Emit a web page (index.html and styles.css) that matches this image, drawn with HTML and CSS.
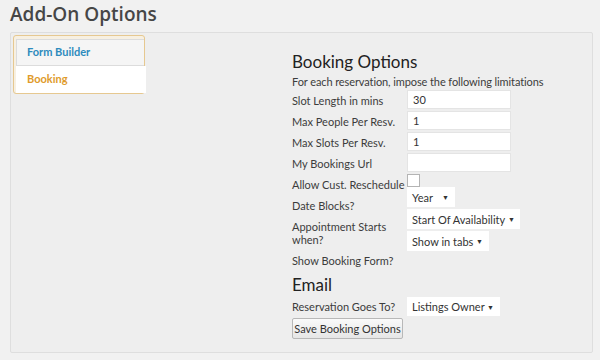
FILE: index.html
```html
<!DOCTYPE html>
<html lang="en">
<head>
    <meta charset="UTF-8">
    <title>Add-On Options</title>
    <link rel="stylesheet" href="styles.css">
</head>
<body>
    <div class="wrap">
        <h1 class="page-title">Add-On Options</h1>
        <div class="panel">
            <div class="tabs">
                <div class="tab">Form Builder</div>
                <div class="tab active">Booking</div>
            </div>
            <div class="content">
                <h2 class="section-title">Booking Options</h2>
                <p class="intro">For each reservation, impose the following limitations</p>
                <div class="form">
                    <div class="labels">
                        <div class="label">Slot Length in mins</div>
                        <div class="label">Max People Per Resv.</div>
                        <div class="label">Max Slots Per Resv.</div>
                        <div class="label">My Bookings Url</div>
                        <div class="label">Allow Cust. Reschedule</div>
                        <div class="label">Date Blocks?</div>
                        <div class="label">Appointment Starts<br>when?</div>
                        <div class="label">Show Booking Form?</div>
                    </div>
                    <div class="fields">
                        <input class="text-input" type="text" value="30">
                        <input class="text-input" type="text" value="1">
                        <input class="text-input" type="text" value="1">
                        <input class="text-input" type="text" value="">
                        <span class="checkbox"></span>
                        <div class="select select-year">Year <span class="caret">&#9660;</span></div>
                        <div class="select select-start">Start Of Availability <span class="caret">&#9660;</span></div>
                        <div class="select select-show">Show in tabs <span class="caret">&#9660;</span></div>
                    </div>
                </div>
                <h2 class="section-title email">Email</h2>
                <div class="email-row">
                    <div class="label">Reservation Goes To?</div>
                    <div class="select select-owner">Listings Owner <span class="caret">&#9660;</span></div>
                </div>
                <button class="save-btn">Save Booking Options</button>
            </div>
        </div>
    </div>
</body>
</html>
```
FILE: styles.css
```css
body {
    margin: 0;
    background-color: #f1f1f1;
    font-family: Lato, sans-serif;
    color: #444;
}
.wrap {
    padding: 0 7px 0 10px;
}
.page-title {
    margin: 0;
    padding-top: 1px;
    height: 31px;
    font-family: 'Open Sans', sans-serif;
    font-size: 19px;
    font-weight: 600;
    line-height: 26px;
    color: #464646;
}
.panel {
    display: flex;
    height: 319px;
    background-color: #eeeeee;
    border: 1px solid #dedede;
    border-radius: 2px;
}
.tabs {
    margin: 2px;
    width: 128px;
    height: 53px;
    padding: 3px 0 1px 2px;
    border: 1px solid #e6c890;
    border-radius: 3px;
    background-color: #f7f0e2;
}
.tab {
    height: 25px;
    line-height: 24px;
    padding-left: 10px;
    font-size: 11px;
    font-weight: bold;
    color: #2d8bbd;
    background-color: #f5f5f5;
    border: 1px solid #dcdcdc;
    border-right: 0;
}
.tab.active {
    margin-right: -2px;
    color: #e09b2b;
    background-color: #ffffff;
    border-color: #ffffff;
}
.content {
    margin-left: 145px;
    padding-top: 16px;
}
.section-title {
    margin: 0;
    font-size: 17px;
    font-weight: normal;
    line-height: 26px;
    color: #222;
}
.intro {
    margin: 0;
    font-size: 11px;
    line-height: 14px;
    letter-spacing: -0.1px;
    color: #3c3c3c;
}
.form {
    display: flex;
}
.labels {
    width: 115px;
    padding-top: 5px;
}
.label {
    font-size: 11px;
    line-height: 13px;
    margin-bottom: 8px;
    white-space: nowrap;
    color: #3c3c3c;
}
.fields {
    display: flex;
    flex-direction: column;
    align-items: flex-start;
    gap: 2px;
    padding-top: 1px;
}
.text-input {
    box-sizing: border-box;
    width: 104px;
    height: 19px;
    margin: 0;
    padding: 0 5px;
    border: 1px solid #e4e4e4;
    background: #fff;
    font-family: Lato, sans-serif;
    font-size: 11px;
    color: #333;
}
.checkbox {
    width: 11px;
    height: 11px;
    margin: 0 0 -2px 0;
    border: 1px solid #b4b4b4;
    background: #fff;
}
.select {
    box-sizing: border-box;
    display: flex;
    justify-content: space-between;
    align-items: center;
    height: 20px;
    padding: 0 6px 0 5px;
    background: #fff;
    font-size: 11px;
    color: #333;
}
.select .caret {
    font-size: 7px;
}
.select-year {
    width: 48px;
}
.select-start {
    width: 113px;
    padding-right: 5px;
}
.select-show {
    width: 82px;
}
.select-owner {
    width: 93px;
    height: 19px;
}
.email {
    line-height: 20px;
}
.email-row {
    display: flex;
    align-items: center;
    margin-top: 2px;
}
.email-row .label {
    width: 115px;
    margin: 0;
}
.save-btn {
    margin-top: 2px;
    width: 111px;
    height: 21px;
    padding: 0;
    font-family: Lato, sans-serif;
    font-size: 11px;
    color: #333;
    background: linear-gradient(#fafafa, #e6e6e6);
    border: 1px solid #b8b8b8;
    border-radius: 2px;
}
```
